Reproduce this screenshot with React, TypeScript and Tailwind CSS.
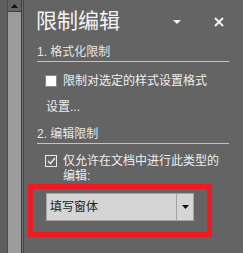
import React from "react";

const font = {
  fontFamily: '"Liberation Sans", "Noto Sans CJK SC", sans-serif',
};

const ScrollStrip = () => (
  <div className="flex h-full shrink-0">
    <div className="w-[7px] bg-[#5f5f5f]" />
    <div className="w-[1px] bg-[#4c4c4c]" />
    <div className="flex w-[13px] flex-col">
      <div className="flex h-[11px] items-center justify-center bg-[#636363]">
        <svg width="7" height="4" viewBox="0 0 7 4">
          <polygon points="3.5,0 7,4 0,4" fill="#111" />
        </svg>
      </div>
      <div className="h-[1px] bg-[#3e3e3e]" />
      <div className="flex-1 bg-[#9b9b9b]" />
    </div>
    <div className="w-[1px] bg-[#3e3e3e]" />
    <div className="w-[1px] bg-[#6e6e6e]" />
    <div className="w-[1px] bg-[#474747]" />
  </div>
);

const SectionLabel = ({ text }: { text: string }) => (
  <div className="ml-[1px] border-b border-[#c4c4c4] text-[12px] leading-[18px] text-[#e6e6e6]">
    {text}
  </div>
);

export default function App() {
  return (
    <div
      className="flex h-[253px] w-[243px] overflow-hidden bg-[#646464]"
      style={font}
    >
      <ScrollStrip />

      <div className="flex flex-1 flex-col pl-[12px] pr-[14px] pt-[7px]">
        {/* header */}
        <div className="flex h-[28px] items-center">
          <span className="text-[21px] leading-[28px] text-[#f4f4f4]">
            限制编辑
          </span>
          <svg
            className="ml-auto mr-[33px] mt-[1px]"
            width="8"
            height="4"
            viewBox="0 0 8 4"
          >
            <polygon points="0,0 8,0 4,4" fill="#f0f0f0" />
          </svg>
          <svg
            className="mr-[5px] mt-[1px]"
            width="10"
            height="10"
            viewBox="0 0 10 10"
          >
            <path
              d="M1 1 L9 9 M9 1 L1 9"
              stroke="#f2f2f2"
              strokeWidth="2"
            />
          </svg>
        </div>

        <div className="mt-[8px]">
          <SectionLabel text="1. 格式化限制" />
        </div>

        <div className="ml-[9px] mt-[10px] flex h-[18px] items-center gap-[6px]">
          <div className="h-[12px] w-[12px] border border-[#8a8a8a] bg-white" />
          <span className="text-[12px] leading-[18px] text-[#eeeeee]">
            限制对选定的样式设置格式
          </span>
        </div>

        <div className="ml-[10px] mt-[8px] text-[12px] leading-[18px] text-[#eeeeee]">
          设置...
        </div>

        <div className="mt-[9px]">
          <SectionLabel text="2. 编辑限制" />
        </div>

        <div className="ml-[9px] mt-[10px] flex gap-[6px]">
          <div className="mt-[1px] flex h-[12px] w-[12px] shrink-0 items-center justify-center border border-[#e8e8e8]">
            <svg width="9" height="8" viewBox="0 0 9 8">
              <path
                d="M1 4 L3.5 6.5 L8 1"
                stroke="#e4e4e4"
                strokeWidth="1.6"
                fill="none"
              />
            </svg>
          </div>
          <span className="text-[12px] leading-[15px] text-[#eeeeee]">
            仅允许在文档中进行此类型的
            <br />
            编辑:
          </span>
        </div>

        {/* highlighted dropdown */}
        <div className="ml-[-8px] h-[53px] w-[184px] border-[5px] border-[#ed1c24] pl-[13px] pt-[4px]">
          <div className="flex h-[28px] w-[148px] border border-[#a4a4a4] bg-[#d5d5d5]">
            <span className="flex-1 pl-[3px] text-[12px] leading-[26px] text-[#1e1e1e]">
              填写窗体
            </span>
            <div className="flex w-[17px] items-center justify-center border-l border-[#a4a4a4]">
              <svg width="7" height="4" viewBox="0 0 7 4">
                <polygon points="0,0 7,0 3.5,4" fill="#111" />
              </svg>
            </div>
          </div>
        </div>
      </div>
    </div>
  );
}
